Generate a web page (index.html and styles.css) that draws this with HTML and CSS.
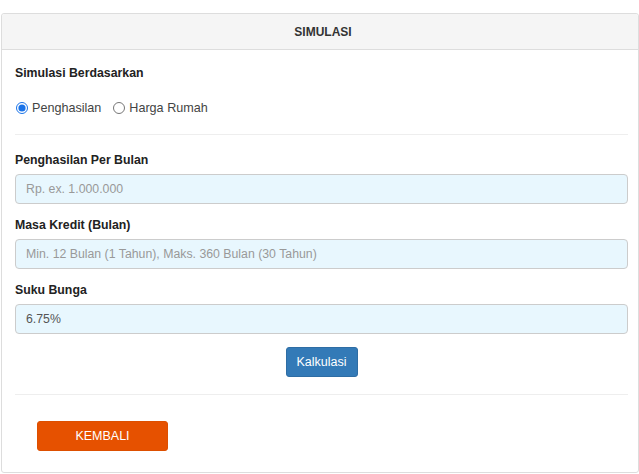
FILE: index.html
```html
<!DOCTYPE html>
<html>
<head>
<meta charset="utf-8">
<link rel="stylesheet" href="styles.css">
</head>
<body>
<div class="panel">
  <div class="panel-heading">SIMULASI</div>
  <div class="panel-body">
    <div class="label label-first">Simulasi Berdasarkan</div>
    <div class="radios">
      <label class="radio"><input type="radio" name="mode" checked> Penghasilan</label>
      <label class="radio"><input type="radio" name="mode"> Harga Rumah</label>
    </div>
    <hr class="divider divider-top">
    <div class="label">Penghasilan Per Bulan</div>
    <input class="field" type="text" placeholder="Rp. ex. 1.000.000">
    <div class="label">Masa Kredit (Bulan)</div>
    <input class="field" type="text" placeholder="Min. 12 Bulan (1 Tahun), Maks. 360 Bulan (30 Tahun)">
    <div class="label">Suku Bunga</div>
    <input class="field" type="text" value="6.75%">
    <div class="actions">
      <button class="btn btn-primary" type="button">Kalkulasi</button>
    </div>
    <hr class="divider divider-bottom">
    <div class="footer">
      <button class="btn btn-back" type="button">KEMBALI</button>
    </div>
  </div>
</div>
</body>
</html>
```

FILE: styles.css
```css
* { box-sizing: border-box; }
html, body { margin: 0; padding: 0; background: #fff; }
body {
  font-family: "Liberation Sans", Arial, sans-serif;
  font-size: 12.3px;
  color: #333;
}
.panel {
  margin: 13px 1px 0 1px;
  width: 638px;
  height: 460px;
  border: 1px solid #ddd;
  border-radius: 3px;
  display: flex;
  flex-direction: column;
}
.panel-heading {
  height: 36px;
  background: #f5f5f5;
  border-bottom: 1px solid #ddd;
  display: flex;
  align-items: center;
  justify-content: center;
  font-weight: bold;
  font-size: 12px;
  color: #333;
  border-radius: 3px 3px 0 0;
  padding-left: 6px;
}
.panel-body {
  padding: 0 10px 0 13px;
  display: flex;
  flex-direction: column;
}
.label {
  font-weight: bold;
  line-height: 18px;
  margin-top: 12px;
  margin-bottom: 5px;
  color: #222;
}
.label-first { margin-top: 14px; margin-bottom: 0; }
.radios {
  display: flex;
  gap: 11px;
  margin-top: 17px;
  line-height: 18px;
  color: #444;
  font-size: 12.6px;
}
.radio {
  display: flex;
  align-items: center;
  gap: 4px;
}
.radio input {
  margin: 0 0 0 1px;
  width: 12px;
  height: 12px;
  accent-color: #1a73e8;
}
.divider {
  border: 0;
  border-top: 1px solid #eee;
  margin: 0;
  width: 100%;
}
.divider-top { margin-top: 17px; margin-bottom: 4px; }
.field {
  width: 100%;
  height: 30px;
  border: 1px solid #ccc;
  border-radius: 4px;
  background: #e8f7fe;
  padding: 0 10px;
  font-family: "Liberation Sans", Arial, sans-serif;
  font-size: 12.3px;
  color: #555;
  outline: none;
}
.field::placeholder { color: #999; }
.actions {
  display: flex;
  justify-content: center;
  margin-top: 13px;
}
.btn {
  font-family: "Liberation Sans", Arial, sans-serif;
  font-size: 12.5px;
  height: 30px;
  border-radius: 3px;
  cursor: pointer;
}
.btn-primary {
  width: 72px;
  background: #337ab7;
  border: 1px solid #2e6da4;
  color: #fff;
  padding: 0;
}
.divider-bottom { margin-top: 17px; }
.footer {
  padding: 26px 0 0 22px;
}
.btn-back {
  width: 131px;
  background: #e65100;
  border: 1px solid #dd4f00;
  color: #fff;
  padding: 0;
}
```
